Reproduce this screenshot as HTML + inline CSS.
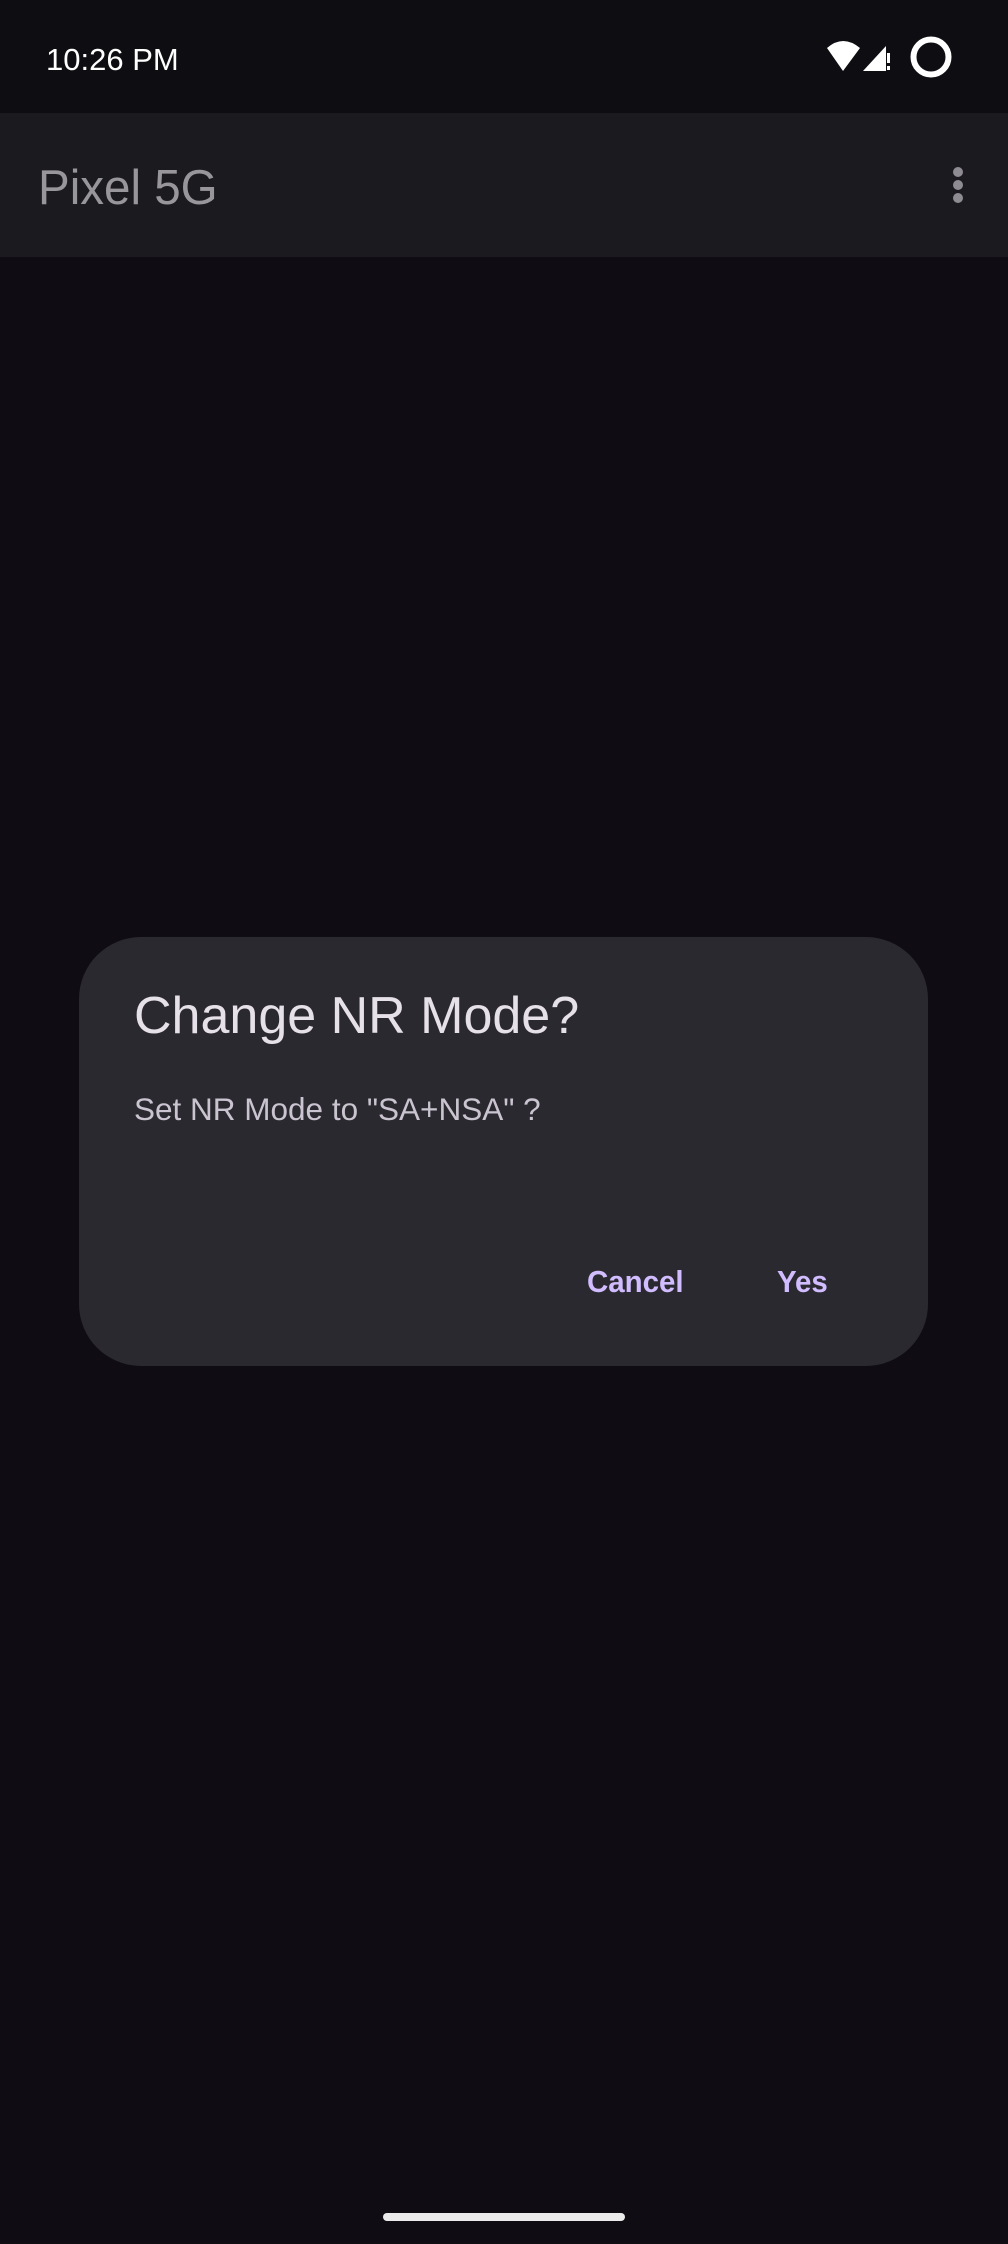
<!DOCTYPE html>
<html><head><meta charset="utf-8"><style>
html,body{margin:0;padding:0;}
body{width:1008px;height:2244px;background:#0f0d13;position:relative;overflow:hidden;font-family:"Liberation Sans",sans-serif;}
.t{position:absolute;white-space:nowrap;line-height:1;transform-origin:0 0;}
</style></head><body>
<div style="position:absolute;left:0;top:0;width:1008px;height:113px;background:#0e0d12"></div>
<div class="t" style="left:46px;top:44px;font-size:31px;color:#fff;">10:26 PM</div>
<svg style="position:absolute;left:0;top:0" width="1008" height="113">
<path d="M827 48 Q843 34 860 48 L843 71 Z" fill="#fff"/>
<path d="M863 71 L886 46 L886 71 Z" fill="#fff"/>
<rect x="887" y="52" width="3" height="12" fill="#0e0d12"/>
<rect x="887" y="53" width="3" height="10" fill="#fff"/>
<rect x="887" y="66" width="3" height="4" fill="#fff"/>
<circle cx="931" cy="57" r="17.5" fill="none" stroke="#fff" stroke-width="6"/>
</svg>
<div style="position:absolute;left:0;top:113px;width:1008px;height:144px;background:#1b1b1f"></div>
<div class="t" style="left:38px;top:164px;font-size:49px;color:#99969b;transform:scaleX(0.97)">Pixel 5G</div>
<svg style="position:absolute;left:950px;top:164px" width="16" height="42">
<circle cx="8" cy="8" r="5" fill="#8e8c92"/><circle cx="8" cy="21" r="5" fill="#8e8c92"/><circle cx="8" cy="34" r="5" fill="#8e8c92"/>
</svg>
<div style="position:absolute;left:79px;top:937px;width:849px;height:429px;background:#2b2930;border-radius:62px"></div>
<div class="t" style="left:134px;top:990px;font-size:52px;color:#e6e0e9">Change NR Mode?</div>
<div class="t" style="left:134px;top:1094px;font-size:31.5px;color:#cac4d0">Set NR Mode to "SA+NSA" ?</div>
<div class="t" style="left:587px;top:1266px;font-size:31px;font-weight:bold;color:#d0bcff;transform:scaleX(0.95)">Cancel</div>
<div class="t" style="left:777px;top:1266px;font-size:31px;font-weight:bold;color:#d0bcff;transform:scaleX(0.95)">Yes</div>
<div style="position:absolute;left:383px;top:2213px;width:242px;height:8px;border-radius:4px;background:#ebebeb"></div>
</body></html>
